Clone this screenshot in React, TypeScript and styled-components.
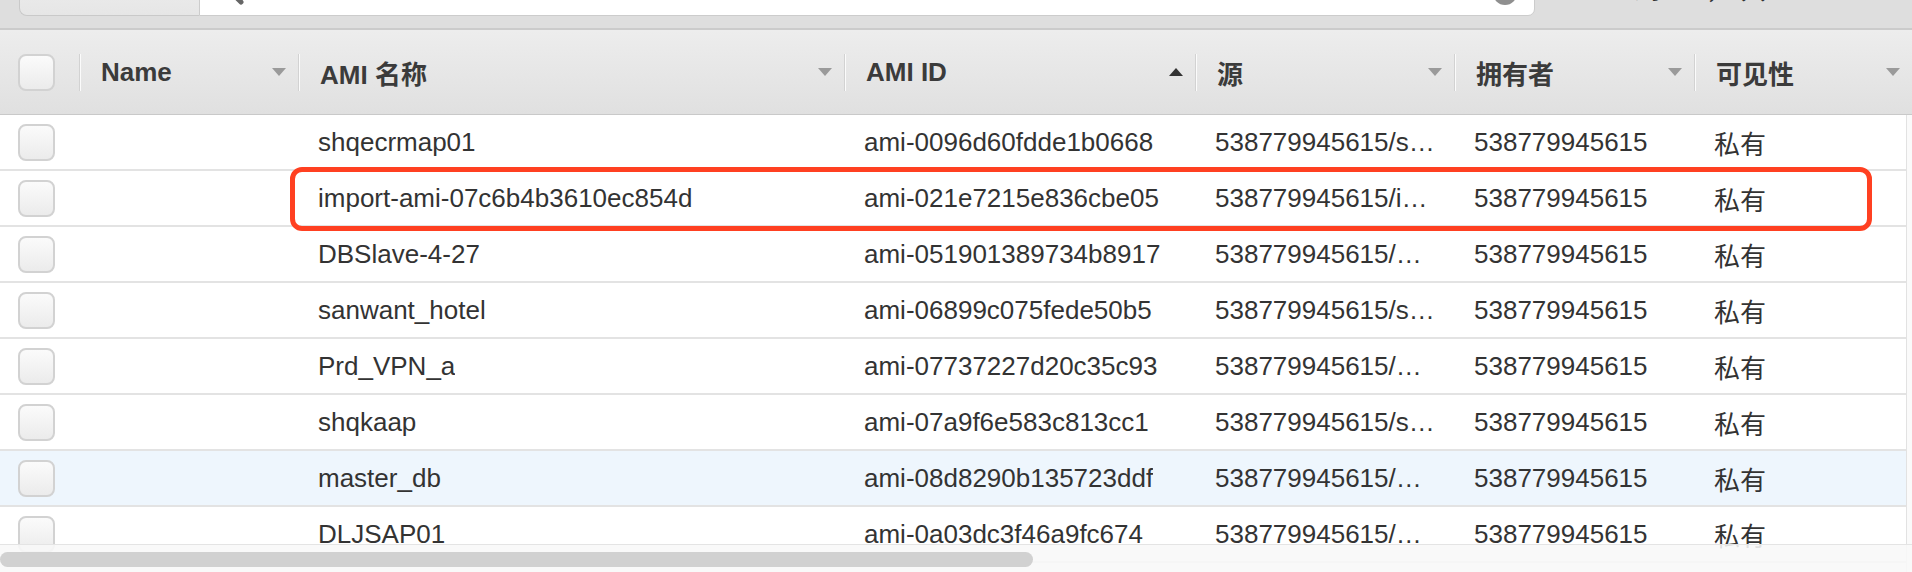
import React from "react";
import styled, { createGlobalStyle } from "styled-components";

const GlobalStyle = createGlobalStyle`
  html, body { margin: 0; padding: 0; background: #ffffff; }
  body {
    font-family: "Liberation Sans", Arial, "Noto Sans CJK SC", sans-serif;
    overflow: hidden;
  }
  * { box-sizing: border-box; }
`;

const COLS = "79px 219px 546px 351px 259px 240px 1fr";

const Page = styled.div`
  width: 1912px;
  height: 572px;
  display: flex;
  flex-direction: column;
  overflow: hidden;
`;

const TopBar = styled.div`
  height: 30px;
  flex: none;
  background: #dedede;
  border-bottom: 2px solid #cbcbcb;
  overflow: hidden;
  display: flex;
  align-items: flex-end;
  padding-left: 19px;
`;

const TopInner = styled.div`
  display: flex;
  align-items: flex-end;
  height: 50px;
  margin-bottom: 12px;
`;

const FilterButton = styled.div`
  width: 180px;
  height: 50px;
  background: linear-gradient(#efefef, #e6e6e6);
  border: 1px solid #c9c9c9;
  border-right: none;
  border-radius: 0 0 0 8px;
`;

const SearchInput = styled.div`
  width: 1336px;
  height: 50px;
  background: #ffffff;
  border: 1px solid #cccccc;
  border-radius: 0 0 7px 0;
  display: flex;
  align-items: flex-end;
  justify-content: space-between;
  padding: 0 17px 10px 14px;
`;

const ClearDot = styled.div`
  width: 24px;
  height: 24px;
  border-radius: 50%;
  background: #8f8f8f;
`;

const Pager = styled.div`
  margin-left: 30px;
  font-size: 26px;
  line-height: 26px;
  color: #333;
  margin-bottom: 13px;
  white-space: nowrap;
  letter-spacing: 8px;
`;

const HeaderRow = styled.div`
  height: 85px;
  flex: none;
  display: grid;
  grid-template-columns: ${COLS};
  background: linear-gradient(#ededed, #e0e0e0);
  border-bottom: 1px solid #c9c9c9;
`;

const HeaderCell = styled.div`
  display: flex;
  align-items: center;
  min-width: 0;
`;

const CheckCell = styled.div`
  display: flex;
  align-items: center;
  padding-left: 18px;
`;

const Divider = styled.div`
  width: 2px;
  height: 37px;
  flex: none;
  border-left: 1px solid #d2d2d2;
  border-right: 1px solid #fbfbfb;
`;

const HeaderLabel = styled.span`
  margin-left: 20px;
  font-size: 26px;
  font-weight: bold;
  color: #3b3b3b;
  white-space: nowrap;
`;

const SortArrow = styled.span<{ $up?: boolean; $active?: boolean }>`
  margin-left: auto;
  margin-right: 12px;
  width: 0;
  height: 0;
  border-left: 7px solid transparent;
  border-right: 7px solid transparent;
  ${(p) =>
    p.$up
      ? `border-bottom: 8px solid ${p.$active ? "#333" : "#9a9a9a"};`
      : `border-top: 8px solid ${p.$active ? "#333" : "#9a9a9a"};`}
`;

const Checkbox = styled.div`
  width: 37px;
  height: 37px;
  border: 2px solid #d2d2d2;
  border-radius: 8px;
  background: linear-gradient(#fbfbfb, #ebebeb);
`;

const Body = styled.div`
  flex: 1;
  position: relative;
  display: flex;
  overflow: hidden;
`;

const Rows = styled.div`
  flex: 1;
  display: flex;
  flex-direction: column;
`;

const VTrack = styled.div`
  width: 6px;
  flex: none;
  background: #fafafa;
  border-left: 1px solid #e2e2e2;
`;

const Row = styled.div<{ $hl?: boolean }>`
  height: 56px;
  flex: none;
  display: grid;
  grid-template-columns: ${COLS};
  border-bottom: 2px solid #e3e3e3;
  background: ${(p) => (p.$hl ? "#eef6fd" : "#ffffff")};
`;

const Cell = styled.div<{ $pr?: number }>`
  display: flex;
  align-items: center;
  min-width: 0;
  padding-left: 20px;
  padding-right: ${(p) => p.$pr ?? 8}px;
  font-size: 26px;
  color: #333;
`;

const CellText = styled.span`
  white-space: nowrap;
  overflow: hidden;
  text-overflow: ellipsis;
`;

const RowCheckCell = styled.div`
  display: flex;
  align-items: center;
  padding-left: 18px;
`;

const Highlight = styled.div`
  position: absolute;
  left: 290px;
  top: 52px;
  width: 1582px;
  height: 64px;
  border: 5px solid #ff4021;
  border-radius: 12px;
  pointer-events: none;
`;

const HScroll = styled.div`
  position: absolute;
  left: 0;
  right: 0;
  bottom: 0;
  height: 28px;
  background: rgba(248, 248, 248, 0.88);
  border-top: 1px solid #e4e4e4;
  padding-top: 7px;
`;

const Thumb = styled.div`
  width: 1033px;
  height: 15px;
  border-radius: 8px;
  background: #d1d1d1;
`;

type Img = {
  name: string;
  id: string;
  src: string;
  hl?: boolean;
};

const OWNER = "538779945615";

const rows: Img[] = [
  { name: "shqecrmap01", id: "ami-0096d60fdde1b0668", src: "shqecrmap01" },
  { name: "import-ami-07c6b4b3610ec854d", id: "ami-021e7215e836cbe05", src: "import-ami-07c6b4b3610ec854d" },
  { name: "DBSlave-4-27", id: "ami-051901389734b8917", src: "DBSlave-4-27" },
  { name: "sanwant_hotel", id: "ami-06899c075fede50b5", src: "sanwant_hotel" },
  { name: "Prd_VPN_a", id: "ami-07737227d20c35c93", src: "Prd_VPN_a" },
  { name: "shqkaap", id: "ami-07a9f6e583c813cc1", src: "shqkaap" },
  { name: "master_db", id: "ami-08d8290b135723ddf", src: "master_db", hl: true },
  { name: "DLJSAP01", id: "ami-0a03dc3f46a9fc674", src: "DLJSAP01" },
];

const headers: { label: string; up?: boolean; active?: boolean }[] = [
  { label: "Name" },
  { label: "AMI 名称" },
  { label: "AMI ID", up: true, active: true },
  { label: "源" },
  { label: "拥有者" },
  { label: "可见性" },
];

const SearchIcon = () => (
  <svg width="30" height="30" viewBox="0 0 30 30">
    <circle cx="12" cy="12" r="9" fill="none" stroke="#777" strokeWidth="3.5" />
    <path d="M18.5 18.5 L27 27" stroke="#666" strokeWidth="5" strokeLinecap="round" />
  </svg>
);

export default function App() {
  return (
    <Page>
      <GlobalStyle />
      <TopBar>
        <TopInner>
          <FilterButton />
          <SearchInput>
            <SearchIcon />
            <ClearDot />
          </SearchInput>
          <Pager>‹ 1 到 8，共 8 ›</Pager>
        </TopInner>
      </TopBar>
      <HeaderRow>
        <CheckCell>
          <Checkbox />
        </CheckCell>
        {headers.map((h) => (
          <HeaderCell key={h.label}>
            <Divider />
            <HeaderLabel>{h.label}</HeaderLabel>
            <SortArrow $up={h.up} $active={h.active} />
          </HeaderCell>
        ))}
      </HeaderRow>
      <Body>
        <Rows>
          {rows.map((r) => (
            <Row key={r.id} $hl={r.hl}>
              <RowCheckCell>
                <Checkbox />
              </RowCheckCell>
              <Cell />
              <Cell>
                <CellText>{r.name}</CellText>
              </Cell>
              <Cell>
                <CellText>{r.id}</CellText>
              </Cell>
              <Cell $pr={18}>
                <CellText>{`${OWNER}/${r.src}`}</CellText>
              </Cell>
              <Cell>
                <CellText>{OWNER}</CellText>
              </Cell>
              <Cell>
                <CellText>私有</CellText>
              </Cell>
            </Row>
          ))}
        </Rows>
        <VTrack />
        <Highlight />
        <HScroll>
          <Thumb />
        </HScroll>
      </Body>
    </Page>
  );
}
